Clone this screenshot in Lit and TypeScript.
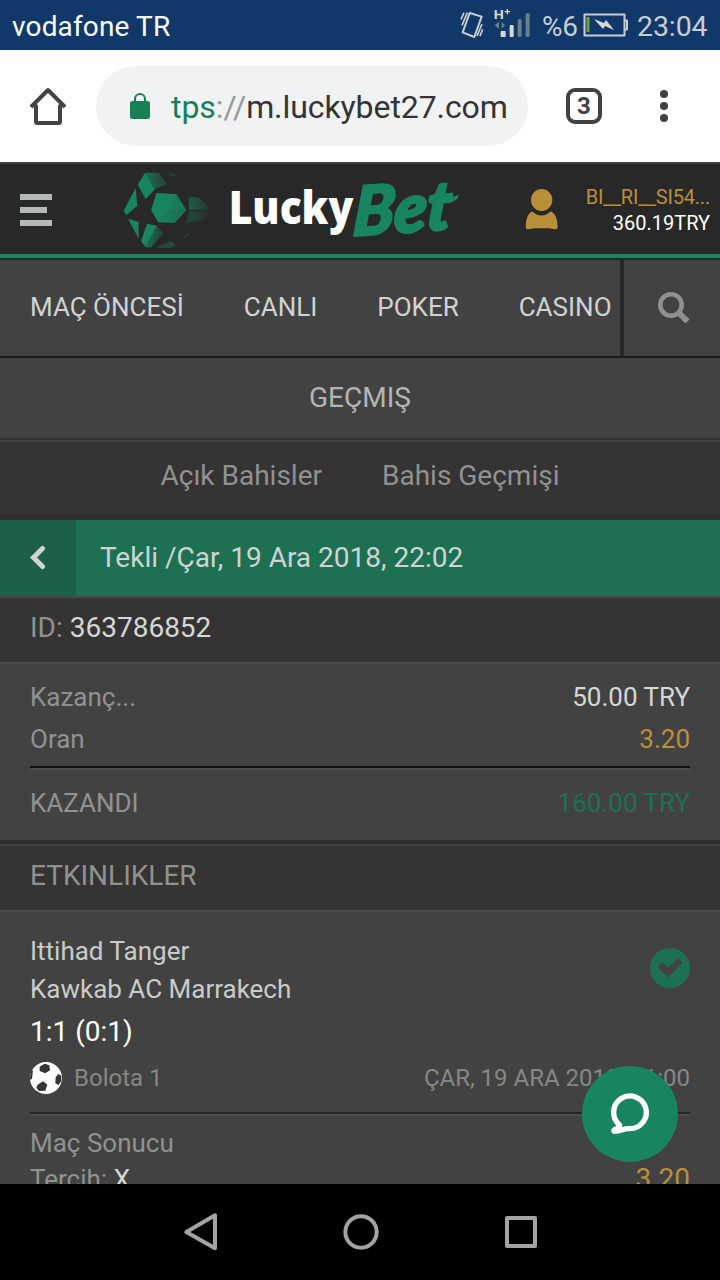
import { LitElement, html, css } from "lit";
import { customElement } from "lit/decorators.js";

const shared = css`
  * { box-sizing: border-box; }
  svg { display: block; flex: none; }
`;

@customElement("status-bar")
class StatusBar extends LitElement {
  static styles = [shared, css`
    :host { display: flex; flex: none; align-items: center; height: 50px; padding: 2px 12px 0; background: #10396a; color: #fff; font-size: 28px; }
    .carrier { flex: 1; letter-spacing: 0.15px; }
    .icons { color: #c9cdd2; margin-top: -2px; }
    .pct { width: 41px; color: #c9cdd2; letter-spacing: -0.3px; }
    .time { width: 71px; color: #c9cdd2; font-size: 28.500px; text-align: left; letter-spacing: -0.1px; }
    .battery { margin-top: -2px; margin-right: 9px; }
  `];
  render() {
    return html`
      <span class="carrier">vodafone TR</span>
      <svg class="icons" width="82" height="50" viewBox="61 0 246 150">
        <g fill="none" stroke="#c9cdd2" stroke-width="5" stroke-linejoin="round">
          <path stroke-width="6" d="M90 39 L126 50 L104 111 L69 97 Z"/>
          <path stroke-width="5" d="M83 38 L67 76 M73 38 L64 58 M127 72 L112 108 M129 88 L121 108"/>
        </g>
        <text x="162" y="57" font-size="40" font-weight="700" fill="#d5d9dd" textLength="30" lengthAdjust="spacingAndGlyphs">H</text>
        <path d="M195 35h16M203 27v16" stroke="#d5d9dd" stroke-width="4"/>
        <path d="M178 65v22L165 76zM186 65v22L196 76z" fill="#68808a"/>
        <g fill="#d5d9dd"><rect x="183" y="93" width="15" height="18" rx="2"/><rect x="210" y="75" width="12" height="36" rx="3"/></g>
        <g fill="#68808a"><rect x="234" y="57" width="12" height="54" rx="5"/><rect x="258" y="39" width="12" height="72" rx="5"/></g>
      </svg>
      <span class="pct">%6</span>
      <svg class="battery" width="45" height="26" viewBox="0 0 45 26">
        <path d="M1.500 2.500h40v21h-40zM42 8.500h2v9h-2" fill="none" stroke="#c9cdd2" stroke-width="2" stroke-linejoin="round"/>
        <path d="M3.500 5h3v15h-3z" fill="#6f9f45"/>
        <path d="M11 7l10 4 2-3 8 10-9-4-2 3z" fill="#d5d9dd"/>
      </svg>
      <span class="time">23:04</span>`;
  }
}

@customElement("browser-bar")
class BrowserBar extends LitElement {
  static styles = [shared, css`
    :host { display: flex; flex: none; align-items: center; height: 112px; background: #fff; padding: 0 0 0 28px; }
    .url { display: flex; align-items: center; width: 432px; height: 80px; margin-left: 28px; border-radius: 40px; background: #f1f2f4; padding: 2px 18px 0 34px; font-size: 32px; color: #353334; white-space: nowrap; letter-spacing: -0.08px; }
    .lock { margin-right: 21px; margin-top: -3px; }
    .secure { color: #188055; }
    .sep { color: #97999a; }
    .tabs { display: flex; align-items: center; justify-content: center; width: 36px; height: 36px; margin-left: 38px; border: 4px solid #424242; border-radius: 9px; color: #424242; font-size: 24px; font-weight: 700; line-height: 28px; }
    .more { margin-left: 56px; }
  `];
  render() {
    return html`
      <svg width="40" height="40" viewBox="0 0 40 40" fill="none" stroke="#424242" stroke-width="4" stroke-linecap="round" stroke-linejoin="round">
        <path d="M8 20v15.500q0 1.500 1.500 1.500h21q1.500 0 1.500-1.500V20"/><path stroke-linecap="butt" d="M3 21L20 4l17 17"/>
      </svg>
      <div class="url">
        <svg class="lock" width="20" height="26" viewBox="0 0 20 26"><rect y="8" width="20" height="18" rx="2.500" fill="#188055"/><path d="M5 9V6a5 5 0 0 1 10 0v3" fill="none" stroke="#188055" stroke-width="2"/></svg>
        <span class="secure">tps</span><span class="sep">://</span><span>m.luckybet27.com</span>
      </div>
      <div class="tabs">3</div>
      <svg class="more" width="12" height="34" viewBox="0 0 12 34" fill="#424242"><circle cx="6" cy="5" r="4"/><circle cx="6" cy="17" r="4"/><circle cx="6" cy="29" r="4"/></svg>`;
  }
}

@customElement("site-header")
class SiteHeader extends LitElement {
  static styles = [shared, css`
    :host { display: flex; flex: none; align-items: flex-start; height: 98px; background: #292829; border-top: 2px solid #454345; border-bottom: 2px solid #292829; box-shadow: inset 0 -4px #188560; padding-left: 20px; }
    .menu { margin-top: 30px; }
    .logo { margin-left: 58px; overflow: visible; }
    .user { margin-left: 55px; margin-top: 24px; }
    .account { flex: 1; padding: 20px 10px 0 0; text-align: right; font-size: 20px; line-height: 26px; color: #fff; white-space: nowrap; }
    .name { color: #b98f3a; letter-spacing: -0.2px; }
  `];
  render() {
    return html`
      <svg class="menu" width="32" height="32" viewBox="0 0 32 32" fill="#b4b9b7"><path d="M0 0h32v6H0zM0 13h27v6H0zM0 26h32v6H0z"/></svg>
      <svg class="logo" width="360" height="90" viewBox="0 12 1080 270">
        <defs>
          <linearGradient id="a"><stop offset="0" stop-color="#1a7254"/><stop offset="1" stop-color="#263e34"/></linearGradient>
          <linearGradient id="b"><stop offset="0" stop-color="#188560"/><stop offset="1" stop-color="#1f6a4e"/></linearGradient>
        </defs>
        <g fill="#188560">
          <path d="M105 38L134 88 107 117 83 74z"/><path d="M77 84l5 53-33 29-8-14z"/>
          <path d="M54 176l32 10v50z"/><path d="M111 191l30 6-34 65-14-18z"/>
          <path d="M140 98L124 150 145 187 167 152z"/>
        </g>
        <path d="M105 38h41l26 35-38 15z" fill="url(#a)"/>
        <path d="M140 98l59 5 30 48-62 1z" fill="#188560"/>
        <path d="M140 98L124 150 145 187 182 150z" fill="#188560"/>
        <path d="M182 150l47 1-35 38-49-2z" fill="url(#b)"/>
        <path d="M182 150l17-47 30 48z" fill="#197a59"/>
        <path d="M141 197l20 21-38 44h-16z" fill="url(#a)"/>
        <path d="M237 110l28 3 20 15 13 22h-61z" fill="url(#a)" opacity=".7"/><path d="M237 154h59l-20 26-47 9z" fill="url(#a)" opacity=".45"/>
        <path d="M138 263l46-21 12 12-12 9z" fill="#244b3a"/>
        <path d="M172 41l18-3 15 15-13-3zM222 234l8-14 13-3-10 12z" fill="#263d33"/>
        <text transform="translate(726 228) rotate(-4) skewX(-8)" font-family="Lato" font-weight="900" font-style="italic" font-size="204" fill="#188560" stroke="#188560" stroke-width="7" stroke-linejoin="round" textLength="296" lengthAdjust="spacingAndGlyphs">Bet</text>
        <path d="M958 114q45 5 90-10-8 25-42 26-28 1-48 0z" fill="#188560"/>
        <text x="356" y="191" font-family="Open Sans" font-weight="800" font-size="140" fill="#fff" textLength="374" lengthAdjust="spacingAndGlyphs">Lucky</text>
      </svg>
      <svg class="user" width="34" height="42" viewBox="556 84 102 126" fill="#b98f3a">
        <ellipse cx="606" cy="120" rx="32" ry="33"/><path d="M577 154q28 25 57 0 20 12 20 46 0 8-8 8l-18-3h-44l-18 3q-8 0-8-8 0-34 19-46z"/>
      </svg>
      <div class="account"><div class="name">BI__RI__SI54...</div><div>360.19TRY</div></div>`;
  }
}

@customElement("site-nav")
class SiteNav extends LitElement {
  static styles = [shared, css`
    :host { display: flex; flex: none; height: 98px; background: #424242; border-bottom: 2px solid #1d1d1d; color: #d1d3d2; font-size: 26px; line-height: 95px; }
    .items { display: flex; gap: 60px; width: 624px; padding-left: 30px; white-space: nowrap; border-right: 4px solid #282828; }
    .search { flex: 1; display: flex; align-items: center; justify-content: center; padding-left: 4px; }
  `];
  render() {
    return html`
      <div class="items">${["MAÇ ÖNCESİ", "CANLI", "POKER", "CASINO"].map((t) => html`<span>${t}</span>`)}</div>
      <div class="search"><svg width="34" height="34" viewBox="0 0 34 34" fill="none" stroke="#8f9190"><circle cx="14" cy="14" r="10.700" stroke-width="4.600"/><path d="M22 22l8.500 8.500" stroke-width="6"/></svg></div>`;
  }
}

@customElement("bet-details")
class BetDetails extends LitElement {
  static styles = [shared, css`
    :host { display: flex; flex-direction: column; flex: 1; min-height: 0; overflow: hidden; background: #424242; color: #909291; font-size: 26px; }
    :host > * { flex: none; }
    .title { height: 82px; line-height: 79px; text-align: center; color: #b3b5b4; font-size: 28px; border-bottom: 2px solid #303030; }
    .tabs { display: flex; justify-content: center; gap: 60px; height: 80px; line-height: 68px; font-size: 28px; background: #363334; border-top: 2px solid #454344; border-bottom: 6px solid #302e2f; }
    .slip { display: flex; height: 78px; line-height: 75px; background: #1d7152; border-bottom: 2px solid #484848; color: #d1d3d2; font-size: 28px; }
    .back { display: flex; align-items: center; justify-content: center; width: 76px; height: 76px; background: #1b6047; }
    .label { padding-left: 24px; }
    .strip { height: 66px; padding-left: 30px; line-height: 59px; font-size: 28px; background: #363334; border-bottom: 2px solid #4b4b4b; }
    .bright { color: #d5d8d6; }
    .gold { color: #b98f3a; }
    .green { color: #1d7152; }
    .sums { height: 180px; padding: 12px 30px 0; border-bottom: 4px solid #2f2e2e; }
    .row { display: flex; justify-content: space-between; height: 42px; line-height: 42px; }
    .rule { height: 4px; border-top: 2px solid #111; border-bottom: 2px solid #4d4d4d; margin: 6px 0 12px; }
    .events { border-top: 2px solid #454444; height: 68px; }
    .match { padding: 20px 30px 0; }
    .teams { display: flex; justify-content: space-between; line-height: 38px; color: #c9cccb; }
    .tick { margin-top: 16px; }
    .score { font-size: 28px; height: 46px; line-height: 48px; color: #fff; }
    .meta { display: flex; align-items: center; height: 48px; font-size: 24px; color: #858786; }
    .league { flex: 1; padding-left: 12px; }
    .soft { border-top-color: #262626; margin: 10px 0 9px; }
    .line { line-height: 36px; display: flex; justify-content: space-between; }
    .odds { font-size: 28px; }
  `];
  render() {
    return html`
      <div class="title">GEÇMIŞ</div>
      <div class="tabs"><span>Açık Bahisler</span><span>Bahis Geçmişi</span></div>
      <div class="slip">
        <div class="back"><svg width="16" height="26" viewBox="0 0 16 26"><path d="M12.500 3.500L3.500 12.500l9 9" fill="none" stroke="#d1d3d2" stroke-width="5" stroke-linecap="round"/></svg></div>
        <div class="label">Tekli /Çar, 19 Ara 2018, 22:02</div>
      </div>
      <div class="strip">ID: <span class="bright">363786852</span></div>
      <div class="sums">
        <div class="row"><span>Kazanç...</span><span class="bright">50.00 TRY</span></div>
        <div class="row"><span>Oran</span><span class="gold">3.20</span></div>
        <div class="rule"></div>
        <div class="row"><span>KAZANDI</span><span class="green">160.00 TRY</span></div>
      </div>
      <div class="strip events">ETKINLIKLER</div>
      <div class="match">
        <div class="teams">
          <div>Ittihad Tanger<br>Kawkab AC Marrakech</div>
          <svg class="tick" width="40" height="40" viewBox="750 143 120 120"><circle cx="810" cy="203" r="60" fill="#1d7152"/><path d="M774 199l13-13 18 17 30-29 12 13-43 44z" fill="#424242" stroke="#424242" stroke-width="2" stroke-linejoin="round"/></svg>
        </div>
        <div class="score">1:1 (0:1)</div>
        <div class="meta">
          <svg width="32" height="32" viewBox="90 666 96 96"><circle cx="138" cy="714" r="48" fill="#fff"/><g fill="#353535"><path d="M119 680l15-9 14 5 2 15-14 9-17-7zM113 734l16-10 13 10-6 18-19 1-8-10zM167 712l8-10 9 5v16l-8 12-10-5zM90 712l3-18 6-3-3 25-5 4z"/></g></svg>
          <span class="league">Bolota 1</span><span>ÇAR, 19 ARA 2018, 21:00</span>
        </div>
        <div class="rule soft"></div>
        <div class="line">Maç Sonucu</div>
        <div class="line"><span>Tercih: <span class="bright">X</span></span><span class="gold odds">3.20</span></div>
      </div>`;
  }
}

@customElement("system-nav")
class SystemNav extends LitElement {
  static styles = [shared, css`
    :host { display: block; flex: none; height: 96px; background: #000; }
    .keys { display: block; margin: auto; }
  `];
  render() {
    return html`<svg class="keys" width="400" height="96" viewBox="0 12 1200 288" fill="none" stroke="#a0a5a3" stroke-width="12" stroke-linejoin="round"><path d="M165 106v99L79 156z"/><circle cx="603" cy="156" r="47"/><path d="M1041 114h84v84h-84z"/></svg>`;
  }
}

@customElement("app-root")
class AppRoot extends LitElement {
  static styles = [shared, css`
    :host { display: flex; flex-direction: column; position: relative; width: 720px; height: 1280px; overflow: hidden; background: #424242; font-family: Roboto, "Noto Sans", sans-serif; }
    .chat { position: absolute; left: 582px; top: 1066px; width: 96px; height: 96px; }
  `];
  render() {
    return html`
      <status-bar></status-bar>
      <browser-bar></browser-bar>
      <site-header></site-header>
      <site-nav></site-nav>
      <bet-details></bet-details>
      <system-nav></system-nav>
      <svg class="chat" viewBox="546 498 288 288"><circle cx="690" cy="642" r="144" fill="#188560"/><path d="M659 675a49 49 0 1 1 31 11q-12-1-22 3-14 5-25 5-4-4 6-8 10-4 10-11z" fill="none" stroke="#fff" stroke-width="16" stroke-linejoin="round"/></svg>`;
  }
}
